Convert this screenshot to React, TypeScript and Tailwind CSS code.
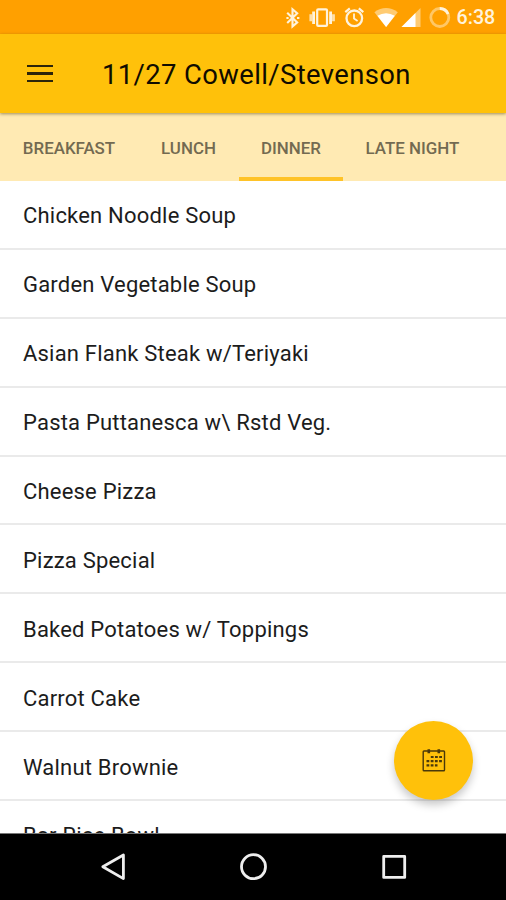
import React from "react";

const tabs = [
  { label: "BREAKFAST", box: "w-[138px]" },
  { label: "LUNCH", box: "w-[101px]" },
  { label: "DINNER", box: "w-[104px]", active: true },
  { label: "LATE NIGHT", box: "w-[139px]" },
];

const dishes = [
  "Chicken Noodle Soup",
  "Garden Vegetable Soup",
  "Asian Flank Steak w/Teriyaki",
  "Pasta Puttanesca w\\ Rstd Veg.",
  "Cheese Pizza",
  "Pizza Special",
  "Baked Potatoes w/ Toppings",
  "Carrot Cake",
  "Walnut Brownie",
  "Bar Rice Bowl",
];

function StatusBar() {
  return (
    <div className="flex h-[34px] shrink-0 items-center bg-[#ffa000] pl-[284px] text-[#fff3dc]">
      <svg className="h-[34px] w-[170px] shrink-0" viewBox="284 0 170 34" fill="none" stroke="currentColor">
        <path d="M287.2 12.8l10 9.6-4.7 4.1V9.2l4.7 4.1-10 9.6" strokeWidth="2.1" />
        <path d="M286.4 17.9h2.2M297 17.9h2.4" strokeWidth="2" />
        <rect x="317.2" y="9.3" width="9.8" height="16.6" rx="1" strokeWidth="2.2" />
        <path d="M313.6 11.5v12.4M330.6 11.5v12.4" strokeWidth="2.8" />
        <path d="M310.8 14.2v7M333.5 14.2v7" strokeWidth="2.8" stroke="#ffe0a8" />
        <circle cx="354.3" cy="18.3" r="7.8" strokeWidth="2.3" />
        <path d="M354 13.6v5l3.6 2.3" strokeWidth="1.8" />
        <path d="M345.3 12.1l4.5-3.8M363.3 12.1l-4.5-3.8" strokeWidth="2.2" />
        <path d="M374.4 12.2Q386 4 397.8 12.2L386.1 27Z" fill="#ffcb72" stroke="none" />
        <path d="M377.4 15.8Q386 10.5 394.8 15.8L386.1 27Z" fill="white" stroke="none" />
        <path d="M420.5 8v19H401.5Z" fill="#ffcb72" stroke="none" />
        <path d="M415.5 13v14H401.5Z" fill="white" stroke="none" />
        <circle cx="439.8" cy="17.5" r="9" stroke="#ffc766" strokeWidth="2.8" />
        <path d="M439.8 8.5a9 9 0 0 1 8.3 5.5" strokeWidth="2.8" />
      </svg>
      <span className="ml-[2.5px] w-[42px] whitespace-nowrap pt-[2px] text-[19.7px] font-medium leading-[34px]">6:38</span>
    </div>
  );
}

function Toolbar() {
  return (
    <header className="relative z-10 flex h-[79px] shrink-0 items-center bg-[#ffc10a] pl-[27px] shadow-[0_1px_3px_rgba(80,65,20,0.55)]">
      <button aria-label="Menu" className="flex w-[26px] flex-col gap-[5px]">
        <span className="h-[2.6px] bg-[#2d250a]" />
        <span className="h-[2.6px] bg-[#2d250a]" />
        <span className="h-[2.6px] bg-[#2d250a]" />
      </button>
      <h1 className="ml-[49px] whitespace-nowrap pt-[2px] text-[27.4px] font-[450] leading-[34px] tracking-[0.4px] text-[#100c00]">
        11/27 Cowell/Stevenson
      </h1>
    </header>
  );
}

function Tabs() {
  return (
    <nav className="flex h-[68px] shrink-0 bg-[#ffeab3]">
      {tabs.map((tab) => (
        <button
          key={tab.label}
          className={`${tab.box} flex flex-col items-center justify-between whitespace-nowrap text-[16.9px] font-medium text-[#736a51]`}
        >
          <span className="pt-[23px] leading-[24px]">{tab.label}</span>
          {tab.active && <span className="h-[4px] w-full bg-[#ffc328]" />}
        </button>
      ))}
    </nav>
  );
}

function CalendarIcon() {
  return (
    <svg className="h-[26px] w-[26px]" viewBox="0 0 26 26" fill="none" stroke="#4a390a">
      <rect x="2.2" y="3" width="21.3" height="19.8" rx="0.8" strokeWidth="1.4" />
      <path d="M7.8 1.2v4M17.8 1.2v4" strokeWidth="2.6" />
      <path d="M9.8 9h11.5M5.5 13.2h15.5M5.5 17.3h11" strokeWidth="2.2" strokeDasharray="2.8 1.4" />
    </svg>
  );
}

function NavigationBar() {
  return (
    <footer className="flex h-[67px] shrink-0 items-center border-t border-[#777] bg-black">
      <svg className="h-[66px] w-full" viewBox="0 834 506 66" fill="none" stroke="#eee" strokeWidth="2.8" strokeLinejoin="round">
        <path d="M102.8 866.8L123.4 855V878.6Z" />
        <circle cx="253.5" cy="866.7" r="12" />
        <rect x="383.7" y="856.4" width="21" height="21" />
      </svg>
    </footer>
  );
}

export default function App() {
  return (
    <div className="relative flex h-[900px] w-[506px] flex-col overflow-hidden bg-white font-[Roboto,sans-serif]">
      <StatusBar />
      <Toolbar />
      <Tabs />
      <main className="min-h-0 flex-1 overflow-hidden">
        <ul>
          {dishes.map((dish) => (
            <li
              key={dish}
              className="flex h-[68.9px] items-center border-b-2 border-[#eaeaea] pl-[23px] pt-[4px] text-[22px] leading-[30px] tracking-[0.2px] text-[#1c1c1c]"
            >
              <span className="whitespace-nowrap">{dish}</span>
            </li>
          ))}
        </ul>
      </main>
      <NavigationBar />
      <button
        aria-label="Choose date"
        className="absolute left-[394px] top-[721px] flex h-[79px] w-[79px] items-center justify-center rounded-full bg-[#ffc10a] shadow-[0_5px_8px_rgba(0,0,0,0.22)]"
      >
        <CalendarIcon />
      </button>
    </div>
  );
}
